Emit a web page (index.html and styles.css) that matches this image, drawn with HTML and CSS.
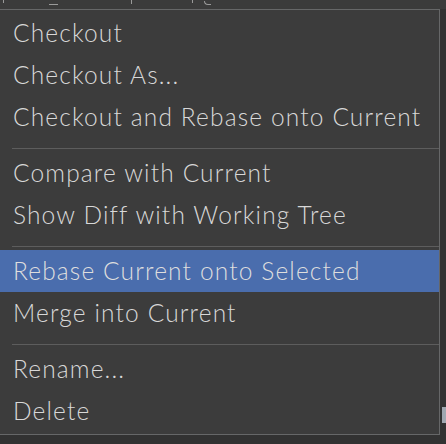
FILE: index.html
```html
<!DOCTYPE html>
<html>
<head>
<meta charset="utf-8">
<link rel="stylesheet" href="styles.css">
</head>
<body>
<div class="topstrip">
  <span class="frag f0"></span><span class="frag f1"></span><span class="frag f2"></span><span class="frag f3"></span><span class="frag f4"></span>
</div>
<div class="stage">
  <div class="menu">
    <div class="item">Checkout</div>
    <div class="item">Checkout As...</div>
    <div class="item">Checkout and Rebase onto Current</div>
    <div class="sep"></div>
    <div class="item">Compare with Current</div>
    <div class="item">Show Diff with Working Tree</div>
    <div class="sep"></div>
    <div class="item selected">Rebase Current onto Selected</div>
    <div class="item">Merge into Current</div>
    <div class="sep"></div>
    <div class="item">Rename...</div>
    <div class="item">Delete</div>
  </div>
  <div class="side"><span class="mark"></span></div>
</div>
</body>
</html>
```
FILE: styles.css
```css
html, body {
  margin: 0;
  padding: 0;
  background: #1d2a3b;
  overflow: hidden;
}
body {
  width: 446px;
  height: 444px;
  font-family: Lato, "Noto Sans", sans-serif;
}
.topstrip {
  height: 9px;
  background: #3b3b3b;
  overflow: hidden;
  position: relative;
}
.frag {
  position: absolute;
  background: #9a9a9a;
}
.f0 { left: 3px; top: 0; width: 1px; height: 3px; }
.f1 { left: 49px; top: 4px; width: 9px; height: 1px; }
.f2 { left: 131px; top: 0; width: 1px; height: 4px; }
.f3 { left: 192px; top: 0; width: 1px; height: 3px; }
.f4 { left: 204px; top: 1px; width: 6px; height: 3px; background: transparent; border-bottom: 1px solid #9a9a9a; border-left: 1px solid #9a9a9a; border-radius: 0 0 0 4px; }
.stage {
  display: flex;
  align-items: flex-start;
  background: #323232;
}
.menu {
  margin-left: -1px;
  width: 439px;
  border: 1px solid #666768;
  background: #3c3c3c;
  padding: 2px 0;
}
.item {
  height: 42px;
  line-height: 42px;
  padding-left: 13px;
  color: #d8d8d8;
  font-size: 24.5px;
  font-weight: 300;
  letter-spacing: 1.15px;
  white-space: nowrap;
}
.item.selected {
  background: #4a6dad;
  color: #dedede;
}
.sep {
  height: 14px;
  margin-left: 12px;
  box-sizing: border-box;
  padding-top: 10px;
}
.sep::after {
  content: "";
  display: block;
  height: 1px;
  background: #5d5d5d;
}
.side {
  flex: 1;
  height: 435px;
  background: #323232;
  position: relative;
}
.mark {
  position: absolute;
  left: 2px;
  top: 398px;
  width: 4px;
  height: 16px;
  background: #9fa7b0;
}
```
